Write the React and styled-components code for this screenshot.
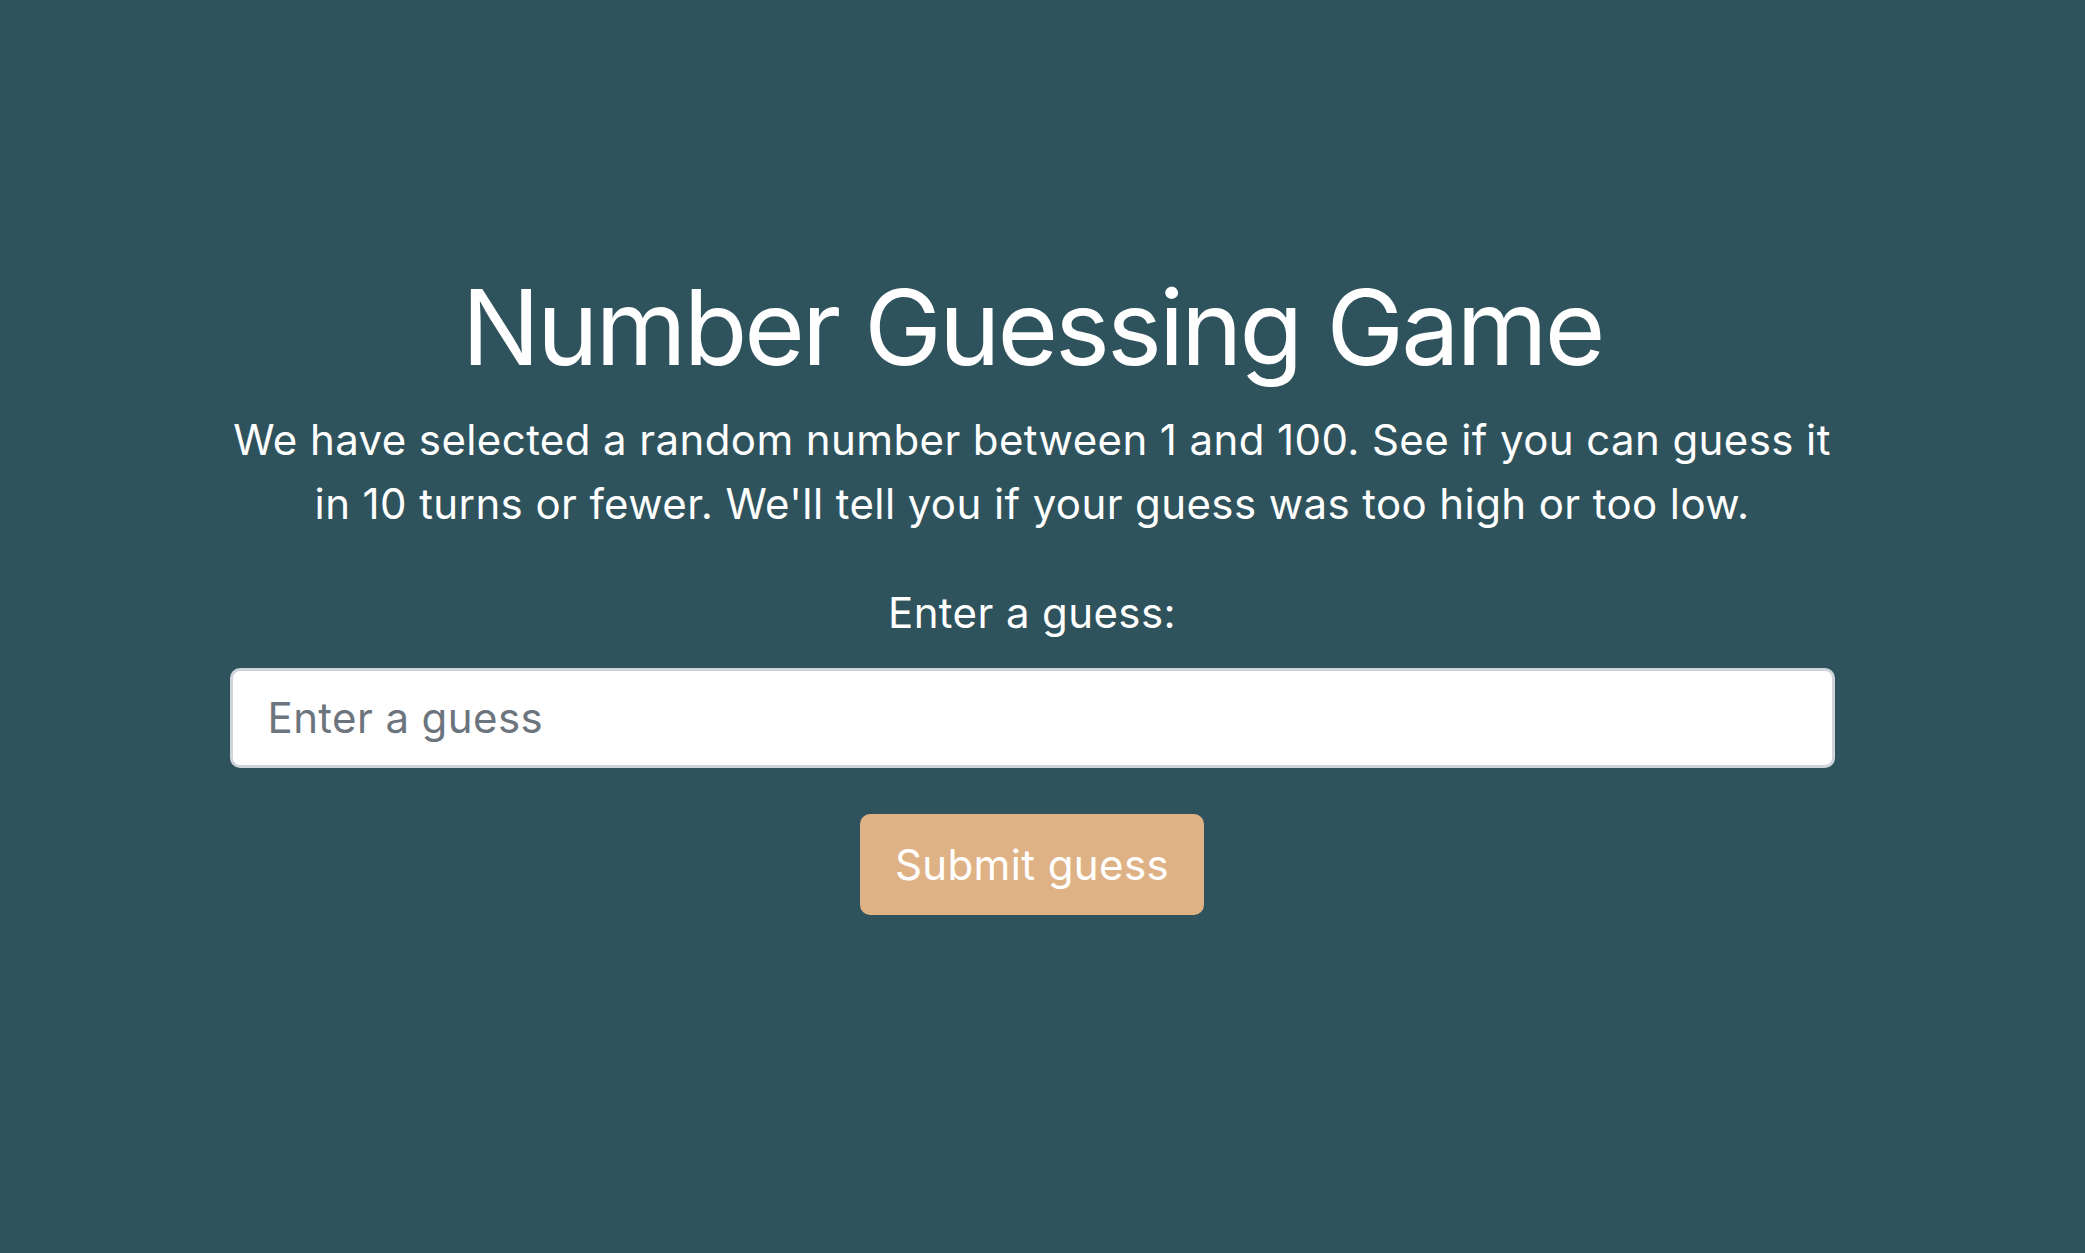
import React from 'react';
import styled, { createGlobalStyle } from 'styled-components';

const GlobalStyle = createGlobalStyle`
  html, body {
    margin: 0;
    padding: 0;
    background: #2f535d;
  }
  body {
    font-family: 'Inter', 'Liberation Sans', sans-serif;
    color: #ffffff;
  }
`;

const Page = styled.main`
  min-height: 100vh;
  box-sizing: border-box;
  display: flex;
  justify-content: center;
  align-items: flex-start;
  padding: 265px 21px 0 0;
`;

const Game = styled.section`
  width: 1605px;
  display: flex;
  flex-direction: column;
  align-items: center;
  text-align: center;
`;

const Title = styled.h1`
  margin: 0 0 18px;
  font-size: 104px;
  line-height: 1.2;
  font-weight: 400;
  letter-spacing: -3px;
`;

const Intro = styled.p`
  margin: 0 0 45px;
  font-size: 42px;
  line-height: 64px;
  font-weight: 400;
  letter-spacing: 0.4px;
`;

const Label = styled.label`
  display: block;
  margin-bottom: 23px;
  font-size: 42px;
  line-height: 64px;
  letter-spacing: 0.4px;
`;

const GuessInput = styled.input`
  box-sizing: border-box;
  width: 100%;
  height: 100px;
  padding: 0 35px;
  border: 3px solid #ced4da;
  border-radius: 10px;
  background: #ffffff;
  font-family: inherit;
  font-size: 42px;
  letter-spacing: 0.4px;
  color: #495057;
  outline: none;

  &::placeholder {
    color: #6c757d;
  }
`;

const SubmitButton = styled.button`
  box-sizing: border-box;
  margin-top: 46px;
  height: 101px;
  padding: 0 35px;
  border: none;
  border-radius: 10px;
  background: #dfb285;
  color: #ffffff;
  font-family: inherit;
  font-size: 42px;
  letter-spacing: 0.4px;
  cursor: pointer;
`;

function App() {
  return (
    <>
      <GlobalStyle />
      <Page>
        <Game>
          <Title>Number Guessing Game</Title>
          <Intro>
            We have selected a random number between 1 and 100. See if you can guess it in 10 turns
            or fewer. We'll tell you if your guess was too high or too low.
          </Intro>
          <Label htmlFor="guessField">Enter a guess:</Label>
          <GuessInput id="guessField" type="text" placeholder="Enter a guess" />
          <SubmitButton type="button">Submit guess</SubmitButton>
        </Game>
      </Page>
    </>
  );
}

export default App;
